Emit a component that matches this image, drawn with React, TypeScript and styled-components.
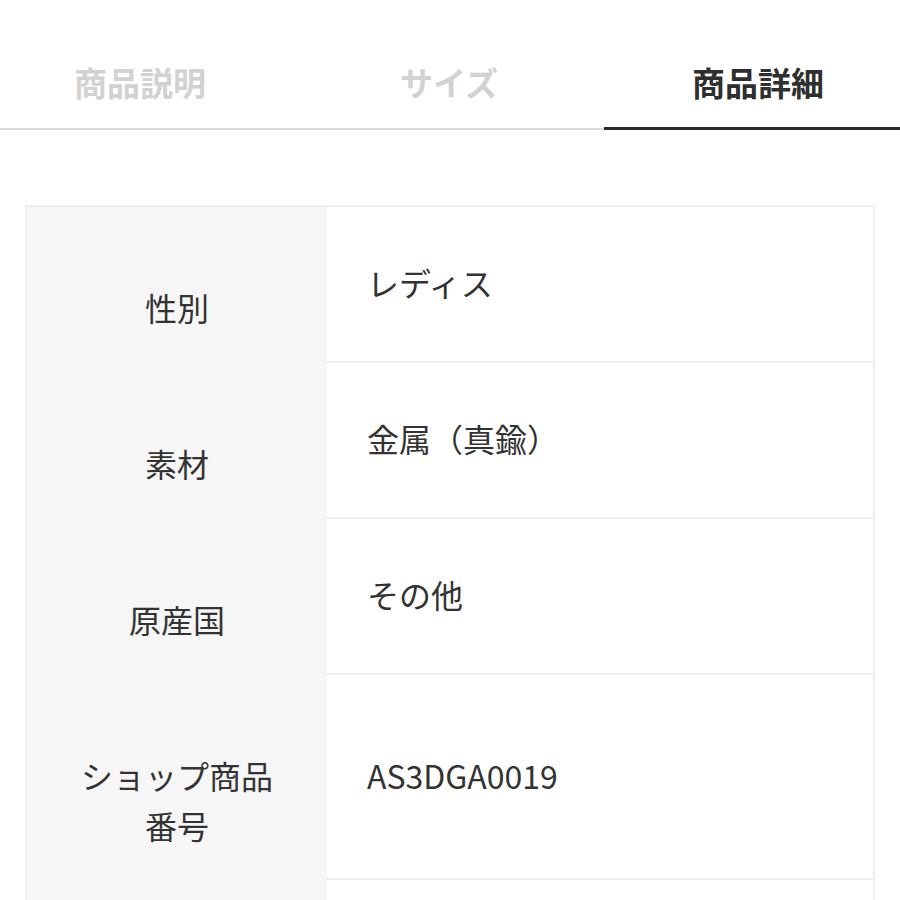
import React from "react";
import styled, { createGlobalStyle } from "styled-components";

const Global = createGlobalStyle`
  html, body {
    margin: 0;
    padding: 0;
    background: #ffffff;
  }
  body {
    font-family: "Noto Sans CJK JP", "Noto Sans", sans-serif;
    color: #333333;
  }
`;

const Page = styled.div`
  width: 900px;
  min-height: 900px;
  overflow: hidden;
`;

const TabBar = styled.div`
  display: grid;
  grid-template-columns: 280px 324px 296px;
  height: 128px;
  border-bottom: 2px solid #dcdcdc;
`;

const Tab = styled.div<{ $active?: boolean; $shift?: number }>`
  display: flex;
  align-items: flex-end;
  justify-content: center;
  padding-bottom: 22px;
  padding-left: ${(p) => p.$shift ?? 0}px;
  margin-bottom: -2px;
  border-bottom: 3px solid ${(p) => (p.$active ? "#2b2b2b" : "transparent")};
  font-size: 33px;
  font-weight: 700;
  line-height: 46px;
  color: ${(p) => (p.$active ? "#2f2f2f" : "#d2d2d2")};
  box-sizing: border-box;
`;

const Content = styled.div`
  padding: 75px 25px 0;
`;

const Table = styled.div`
  border: 2px solid #efefef;
  border-bottom: none;
`;

const Row = styled.div`
  display: grid;
  grid-template-columns: 300px 1fr;
`;

const Label = styled.div`
  background: #f6f6f6;
  display: flex;
  align-items: center;
  justify-content: center;
  padding: 48px 45px 4px;
  text-align: center;
  font-size: 32px;
  line-height: 50px;
  color: #333333;
`;

const Value = styled.div<{ $h: number }>`
  min-height: ${(p) => p.$h}px;
  box-sizing: border-box;
  display: flex;
  align-items: center;
  padding: 0 0 4px 40px;
  border-bottom: 2px solid #efefef;
  font-size: 32px;
  line-height: 46px;
  color: #333333;
`;

const tabs = [
  { label: "商品説明", active: false, shift: 0 },
  { label: "サイズ", active: false, shift: 14 },
  { label: "商品詳細", active: true, shift: 12 },
];

const rows = [
  { label: "性別", value: "レディス", h: 156 },
  { label: "素材", value: "金属（真鍮）", h: 156 },
  { label: "原産国", value: "その他", h: 156 },
  { label: "ショップ商品番号", value: "AS3DGA0019", h: 205 },
  { label: "", value: "", h: 156 },
];

export default function App() {
  return (
    <Page>
      <Global />
      <TabBar>
        {tabs.map((t) => (
          <Tab key={t.label} $active={t.active} $shift={t.shift}>
            {t.label}
          </Tab>
        ))}
      </TabBar>
      <Content>
        <Table>
          {rows.map((r, i) => (
            <Row key={i}>
              <Label>{r.label}</Label>
              <Value $h={r.h}>{r.value}</Value>
            </Row>
          ))}
        </Table>
      </Content>
    </Page>
  );
}
